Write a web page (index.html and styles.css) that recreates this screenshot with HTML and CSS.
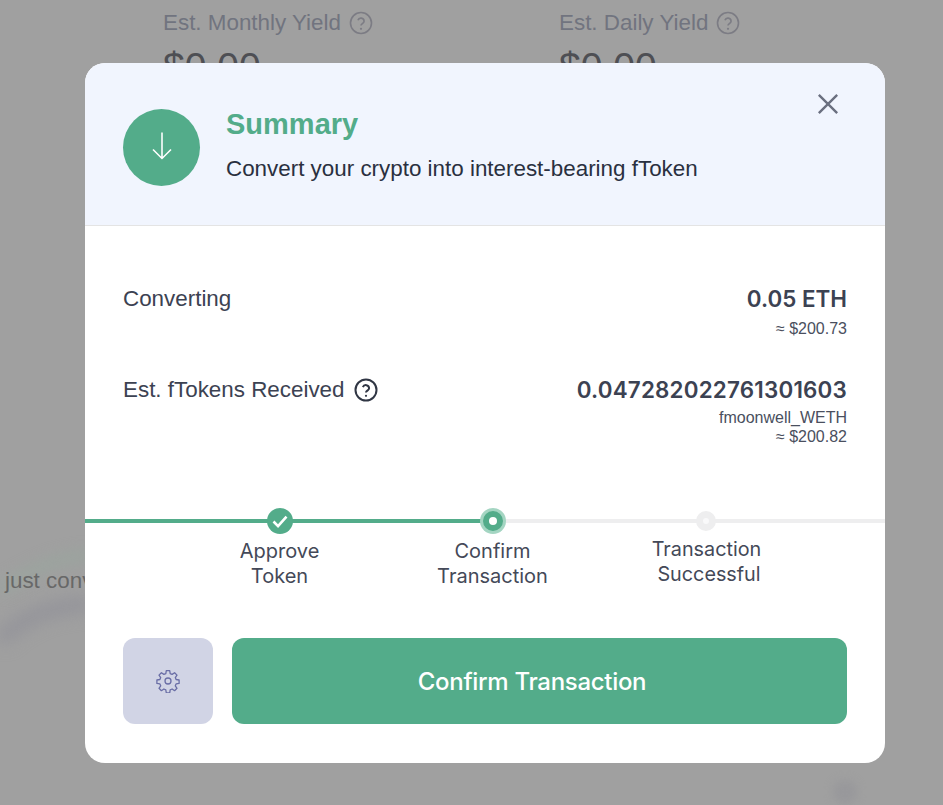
FILE: index.html
```html
<!DOCTYPE html>
<html lang="en">
<head>
    <meta charset="UTF-8">
    <meta name="viewport" content="width=device-width, initial-scale=1.0">
    <title>Summary</title>
    <link rel="stylesheet" href="styles.css">
</head>
<body>
    <svg class="backdrop" viewBox="0 0 943 805">
        <path class="streak-green" d="M0 590C30 570 60 556 90 556"/>
        <path class="streak-grey" d="M0 640C25 615 55 606 90 604"/>
        <circle class="blob" cx="845" cy="792" r="12"/>
    </svg>

    <div class="page">
        <div class="yields">
            <div class="yield">
                <div class="yield-label">Est. Monthly Yield
                    <svg class="help" viewBox="0 0 24 24"><circle cx="12" cy="12" r="10.5"/><path d="M8.9 9.2a3.2 3.2 0 0 1 6.2 1c0 2.1-3.1 2.6-3.1 4.2"/><circle class="dot" cx="12" cy="17.8" r="1.1"/></svg>
                </div>
                <div class="yield-value">$0.00</div>
            </div>
            <div class="yield">
                <div class="yield-label">Est. Daily Yield
                    <svg class="help" viewBox="0 0 24 24"><circle cx="12" cy="12" r="10.5"/><path d="M8.9 9.2a3.2 3.2 0 0 1 6.2 1c0 2.1-3.1 2.6-3.1 4.2"/><circle class="dot" cx="12" cy="17.8" r="1.1"/></svg>
                </div>
                <div class="yield-value">$0.00</div>
            </div>
        </div>
        <p class="ticker">just converted</p>
    </div>

    <div class="modal">
        <header class="modal-header">
            <div class="header-icon">
                <svg viewBox="0 0 24 24"><path d="M12 3v17M6 14.3 12 20.3l6-6"/></svg>
            </div>
            <div class="header-text">
                <h2>Summary</h2>
                <p>Convert your crypto into interest-bearing fToken</p>
            </div>
            <button class="close" aria-label="Close">
                <svg viewBox="0 0 24 24"><path d="M2 2l20 20M22 2 2 22"/></svg>
            </button>
        </header>

        <section class="details">
            <div class="row">
                <div class="row-label">Converting</div>
                <div class="row-values">
                    <div class="amount amount-unit">0.05 ETH</div>
                    <div class="sub sub-spaced">≈ $200.73</div>
                </div>
            </div>
            <div class="row">
                <div class="row-label row-label-help">Est. fTokens Received
                    <svg class="help help-dark" viewBox="0 0 24 24"><circle cx="12" cy="12" r="10.5"/><path d="M8.9 9.2a3.2 3.2 0 0 1 6.2 1c0 2.1-3.1 2.6-3.1 4.2"/><circle class="dot" cx="12" cy="17.8" r="1.1"/></svg>
                </div>
                <div class="row-values">
                    <div class="amount">0.047282022761301603</div>
                    <div class="sub sub-token">fmoonwell_WETH</div>
                    <div class="sub">≈ $200.82</div>
                </div>
            </div>
        </section>

        <section class="stepper">
            <div class="step">
                <span class="dot-done">
                    <svg viewBox="0 0 24 24"><path d="M6 12.5l4.2 4.2L18 8"/></svg>
                </span>
                <span class="step-label">Approve<br>Token</span>
            </div>
            <div class="step">
                <span class="dot-active"></span>
                <span class="step-label">Confirm<br>Transaction</span>
            </div>
            <div class="step step-last">
                <span class="dot-todo"></span>
                <span class="step-label">Transaction<br><span class="line-nudge">Successful</span></span>
            </div>
        </section>

        <footer class="actions">
            <button class="settings" aria-label="Settings">
                <svg viewBox="0 0 24 24"><circle cx="12" cy="12" r="3"/><path d="M10.3 1.6h3.4l.5 3 1.9.8 2.5-1.7 2.4 2.4-1.7 2.5.8 1.9 3 .5v3.4l-3 .5-.8 1.9 1.7 2.5-2.4 2.4-2.5-1.7-1.9.8-.5 3h-3.4l-.5-3-1.9-.8-2.5 1.7-2.4-2.4 1.7-2.5-.8-1.9-3-.5v-3.4l3-.5.8-1.9-1.7-2.5 2.4-2.4 2.5 1.7 1.9-.8z"/></svg>
            </button>
            <button class="confirm">Confirm Transaction</button>
        </footer>
    </div>
</body>
</html>
```

FILE: styles.css
```css
html, body {
    margin: 0;
    padding: 0;
    height: 100%;
}

body {
    position: relative;
    overflow: hidden;
    background-color: #a0a0a0;
    font-family: "Liberation Sans", Arial, sans-serif;
}

/* blurred chart shapes on the dimmed page */
.backdrop {
    position: absolute;
    left: 0;
    top: 0;
    width: 943px;
    height: 805px;
    fill: none;
}

.streak-green {
    stroke: #9aa59e;
    stroke-width: 10;
    filter: blur(7px);
}

.streak-grey {
    stroke: #94949a;
    stroke-width: 16;
    filter: blur(8px);
}

.blob {
    fill: #98989b;
    filter: blur(4px);
}

/* dimmed page behind the modal */
.page {
    position: relative;
    height: 805px;
    padding-top: 9px;
    box-sizing: border-box;
}

.yields {
    display: flex;
    padding-left: 163px;
}

.yield {
    width: 396px;
    flex-shrink: 0;
}

.yield-label {
    display: flex;
    align-items: center;
    gap: 8px;
    font-size: 22.4px;
    line-height: 28px;
    color: #71747f;
}

.yield-value {
    margin-top: 8px;
    font-size: 39px;
    line-height: 44px;
    color: #4e4f54;
}

.ticker {
    margin: 478px 0 0 5px;
    font-size: 22.4px;
    line-height: 28px;
    color: #686868;
    white-space: nowrap;
}

.help {
    width: 24px;
    height: 24px;
    flex-shrink: 0;
    fill: none;
    stroke: #7c7c84;
    stroke-width: 1.6;
}

.help .dot {
    fill: #7c7c84;
    stroke: none;
}

.help-dark {
    stroke: #303644;
    stroke-width: 2;
}

.help-dark .dot {
    fill: #303644;
}

/* modal */
.modal {
    position: absolute;
    left: 85px;
    top: 63px;
    width: 800px;
    height: 700px;
    background-color: #fff;
    border-radius: 20px;
    overflow: hidden;
    display: flex;
    flex-direction: column;
}

.modal-header {
    height: 163px;
    box-sizing: border-box;
    padding: 46px 46px 0 38px;
    background-color: #f1f5fe;
    border-bottom: 1px solid #e4e4e4;
    display: flex;
    align-items: flex-start;
}

.header-icon {
    width: 77px;
    height: 77px;
    border-radius: 50%;
    background-color: #53ac8a;
    display: flex;
    align-items: center;
    justify-content: center;
    flex-shrink: 0;
}

.header-icon svg {
    width: 36px;
    height: 36px;
    margin-top: -4px;
    fill: none;
    stroke: #fff;
    stroke-width: 1.05;
}

.header-text {
    margin-left: 26px;
    flex: 1;
}

.header-text h2 {
    margin: -3px 0 0;
    font-size: 29px;
    line-height: 36px;
    font-weight: 700;
    color: #53ac8a;
}

.header-text p {
    margin: 13px 0 0;
    font-size: 22.4px;
    line-height: 28px;
    color: #2a3040;
}

.close {
    width: 22px;
    height: 22px;
    margin-top: -16px;
    padding: 0;
    border: none;
    background: none;
}

.close svg {
    display: block;
    width: 22px;
    height: 22px;
    fill: none;
    stroke: #6b7080;
    stroke-width: 2.6;
}

.details {
    padding: 58px 38px 0;
}

.row {
    display: flex;
    justify-content: space-between;
    align-items: flex-start;
    margin-bottom: 37px;
}

.row-label {
    display: flex;
    align-items: center;
    gap: 10px;
    font-size: 22.4px;
    line-height: 30px;
    color: #3c4252;
}

.row-label-help {
    gap: 9px;
}

.row-values {
    text-align: right;
}

.amount {
    font-family: Inter, sans-serif;
    font-size: 22.4px;
    line-height: 30px;
    font-weight: 600;
    letter-spacing: 0.2px;
    color: #3c4252;
}

.amount-unit {
    letter-spacing: 0;
}

.sub {
    font-size: 16px;
    line-height: 19px;
    color: #4a4f5e;
}

.sub-spaced {
    margin-top: 5px;
}

.sub-token {
    margin-top: 3px;
}

/* stepper: the track is a background on the row, it stops being green at the active step */
.stepper {
    position: absolute;
    left: 0;
    right: 0;
    top: 445px;
    display: flex;
    padding-left: 88px;
    background-image: linear-gradient(to right, #53ac8a 408px, #eeeeef 408px);
    background-size: 100% 4px;
    background-position: 0 11px;
    background-repeat: no-repeat;
}

.step {
    width: 213px;
    display: flex;
    flex-direction: column;
    align-items: center;
    font-family: Inter, sans-serif;
    font-size: 20px;
    line-height: 25px;
    color: #444958;
    text-align: center;
}

.step-label {
    margin-top: 5px;
}

.step-last .step-label {
    margin-top: 3px;
    margin-left: 2px;
    font-size: 19.8px;
}

.line-nudge {
    margin-left: 5px;
}

.dot-done,
.dot-active,
.dot-todo {
    box-sizing: border-box;
    border-radius: 50%;
    display: flex;
    align-items: center;
    justify-content: center;
}

.dot-done {
    width: 26px;
    height: 26px;
    background-color: #53ac8a;
}

.dot-done svg {
    width: 26px;
    height: 26px;
    fill: none;
    stroke: #fff;
    stroke-width: 2.4;
}

.dot-active {
    width: 20px;
    height: 20px;
    margin: 3px 0;
    background-color: #fff;
    border: 6.5px solid #53ac8a;
    box-shadow: 0 0 0 3px #a4d5c2;
}

.dot-todo {
    width: 20px;
    height: 20px;
    margin: 3px 0;
    background-color: #f9f9fa;
    border: 7px solid #eeeeef;
}

.actions {
    position: absolute;
    left: 38px;
    right: 38px;
    bottom: 39px;
    display: flex;
    gap: 19px;
}

.settings {
    width: 90px;
    height: 86px;
    padding: 0;
    border: none;
    border-radius: 12px;
    background-color: #d1d4e5;
    display: flex;
    align-items: center;
    justify-content: center;
}

.settings svg {
    width: 24px;
    height: 24px;
    fill: none;
    stroke: #6a6ea6;
    stroke-width: 1.3;
    stroke-linejoin: round;
}

.confirm {
    flex: 1;
    height: 86px;
    padding: 0 15px 0 0;
    border: none;
    border-radius: 12px;
    background-color: #53ac8a;
    color: #fff;
    font-family: Inter, sans-serif;
    font-size: 24px;
    font-weight: 500;
    letter-spacing: -0.3px;
}
```
